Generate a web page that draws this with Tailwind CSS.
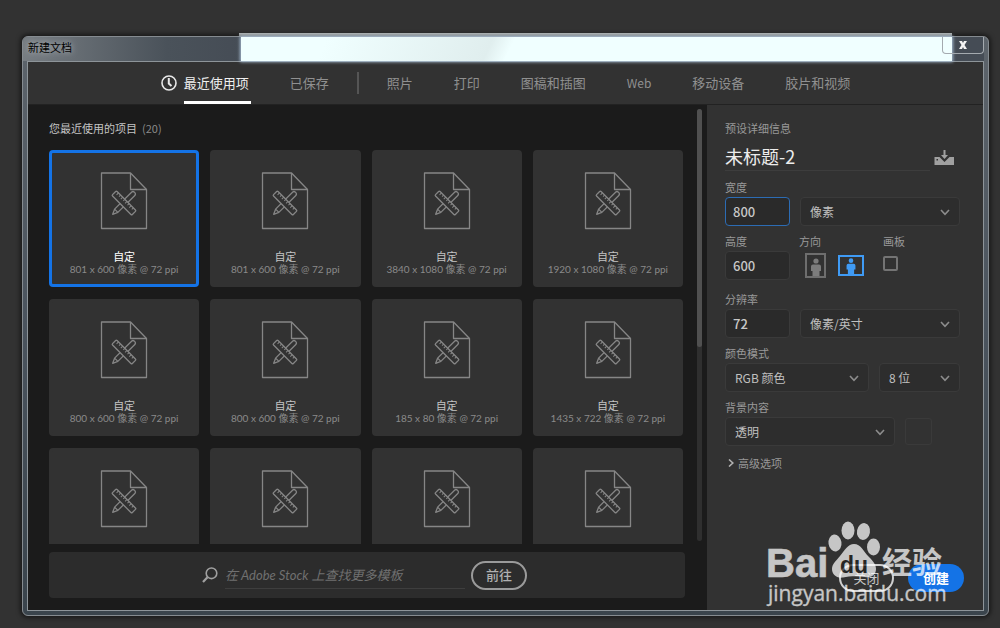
<!DOCTYPE html>
<html lang="zh-CN">
<head>
<meta charset="utf-8">
<title>新建文档</title>
<script src="https://cdn.jsdelivr.net/npm/@tailwindcss/browser@4"></script>
</head>
<body class="bg-[#323232] font-['Noto_Sans_CJK_SC',sans-serif] text-[#b4b4b4]">
<svg class="hidden">
  <symbol id="doc" viewBox="0 0 48 58">
    <g fill="none" stroke="#868686" stroke-width="1.3" stroke-linejoin="round">
      <path d="M1.500 1H30.500L46.500 17.500V56.500H1.500Z"/>
      <path d="M30.500 1V17.500H46.500"/>
      <g transform="translate(24 31) rotate(45)">
        <path d="M-2.300 -13Q-2.300 -15 0 -15Q2.300 -15 2.300 -13V11L0 16L-2.300 11ZM-2.300 11H2.300" fill="#323232"/>
      </g>
      <g transform="translate(24 31) rotate(-45)">
        <rect x="-3.200" y="-14" width="6.400" height="28" rx="1" fill="#323232"/>
        <path d="M3.200 -11H0.500M3.200 -8H1M3.200 -5H0.500M3.200 -2H1M3.200 1H0.500M3.200 4H1M3.200 7H0.500M3.200 10H1" stroke-width="1"/>
      </g>
    </g>
  </symbol>
  <symbol id="chev" viewBox="0 0 10 7"><path d="M1 1L5 5.300L9 1" fill="none" stroke="#8c8c8c" stroke-width="1.600"/></symbol>
  <symbol id="person" viewBox="0 0 14 18"><circle cx="7" cy="3" r="2.600"/><path d="M4 6.500H10Q12 6.500 12 8.500V13H10.500V18H3.500V13H2V8.500Q2 6.500 4 6.500Z"/></symbol>
</svg>

<div class="relative h-screen pl-[22px] pr-[11px] pt-9 pb-3">
  <div class="absolute left-[239px] right-12 top-[33px] h-4 bg-[#d5dbdb]"></div>

  <main class="relative flex h-full flex-col rounded-[6px] border border-[#858b90] bg-linear-to-b from-[#5d646b] via-[#4b545e] to-[#3a444c] px-1 pb-1 shadow-[0_0_4px_2px_rgba(0,0,0,0.5)]">
    <header class="relative flex h-6 shrink-0 items-center pl-px text-[11px] text-black">
      <div class="absolute inset-y-0 -left-1 right-0 bg-linear-to-r from-[#777d82] via-[#4a525a] via-15% to-[#454c55] to-23% rounded-tl-[5px]"></div>
      <div class="absolute inset-y-0 left-[214px] right-[32px] bg-linear-115 from-[#f0ffff] from-12% via-[#e0eeee] via-35% to-[#f0ffff] to-38% shadow-[0_0_3px_1px_#a9bfd6]"></div>
      <h1 class="relative mb-1 text-shadow-[0_0_6px_#c8cccf]">新建文档</h1>
      <button aria-label="关闭窗口" class="absolute right-0 top-0 flex h-[17px] w-[42px] items-center justify-center rounded-b-[4px] border border-t-0 border-[#a4aaaf]">
        <svg class="h-2 w-2.5" viewBox="0 0 10 8"><path d="M1 0H4L5 2L6 0H9L6.500 4L9 8H6L5 6L4 8H1L3.500 4Z" fill="#f4f4f4"/></svg>
      </button>
    </header>

    <div class="flex min-h-0 flex-1 flex-col border border-[#8d9499] bg-[#323232]">
      <nav class="flex h-[42px] shrink-0 items-center justify-center text-[13px] text-[#909090]">
        <svg class="mr-[7px] h-4 w-4" viewBox="0 0 16 16" fill="none" stroke="#e8e8e8"><circle cx="8" cy="8" r="7" stroke-width="1.600"/><path d="M7.800 3V8.500L10.500 11" stroke-width="2"/></svg>
        <a href="#recent" class="mr-[39px] flex h-full w-[67px] items-center border-y-3 border-t-transparent border-b-white whitespace-nowrap text-[#f0f0f0]">最近使用项</a>
        <a href="#saved">已保存</a>
        <span class="ml-7 mr-7 h-[22px] w-0.5 bg-[#555]"></span>
        <div class="flex items-center gap-[41px]">
          <a href="#photo">照片</a><a href="#print">打印</a><a href="#art">图稿和插图</a><a href="#web" class="text-[12px]">Web</a><a href="#mobile">移动设备</a><a href="#film">胶片和视频</a>
        </div>
      </nav>

      <div class="flex min-h-0 flex-1 border-t border-[#222]">
        <section class="flex min-w-0 flex-1 flex-col bg-[#1b1b1b] pb-3 pl-[21px]">
          <div class="flex min-h-0 flex-1">
            <div class="min-w-0 flex-1 overflow-hidden">
              <h2 class="flex h-[45px] items-center gap-[5px] pt-0.5 text-[11px] text-[#c4c4c4]">您最近使用的项目 <span class="text-[#8a8a8a]">(20)</span></h2>
              <div id="cards" class="grid grid-cols-4 gap-x-[11px] gap-y-3"></div>
            </div>
            <div class="mb-[3px] ml-[14px] mr-[5px] mt-1 w-[5px] rounded-full bg-[#2f2f2f]"><div class="h-[55%] rounded-full bg-[#505050]"></div></div>
          </div>
          <form class="mr-[22px] mt-2 flex h-[46px] shrink-0 items-center justify-center rounded-[4px] bg-[#2c2c2c] pr-[5px]">
            <svg class="mr-[7px] h-4 w-4" viewBox="0 0 16 16" fill="none" stroke="#a0a0a0"><circle cx="9.500" cy="6.300" r="5.300" stroke-width="1.600"/><path d="M5.500 10.200L1 15" stroke-width="2.200"/></svg>
            <input aria-label="搜索模板" placeholder="在 Adobe Stock 上查找更多模板" class="h-7 w-60 border-b border-[#3e3e3e] font-[Lato,'Noto_Sans_CJK_SC',sans-serif] text-[13px] italic outline-none placeholder:text-[#707070]">
            <button type="button" class="ml-1.5 h-[29px] w-14 rounded-full border-2 border-[#9a9a9a] text-[13px] font-medium text-[#b0b0b0]">前往</button>
          </form>
        </section>

        <aside class="flex w-[276px] shrink-0 flex-col pb-[18px] pl-[18px] pr-[19px] pt-[15px] text-[11px] text-[#999]">
          <div class="flex flex-1 flex-col pr-1">
            <h2 class="leading-4">预设详细信息</h2>
            <div class="mb-2 mt-2 flex h-[27px] items-center gap-1">
              <input aria-label="名称" value="未标题-2" class="h-[27px] min-w-0 flex-1 border-b border-[#3d3d3d] pb-0.5 text-[18px] text-[#ececec] outline-none">
              <button aria-label="保存预设" class="mr-1.5"><svg class="h-4 w-5" viewBox="0 0 20 16" fill="#a0a0a0"><path d="M9.500 0H11.500V5H14L10.500 9L7 5H9.500Z"/><path d="M0.500 7H5.500L10.500 12L15.500 7H20V15H0.500Z"/><path d="M2.500 9H4V10.500H2.500Z" fill="#323232"/></svg></button>
            </div>

            <label for="w" class="mb-0.5 block h-4 leading-4">宽度</label>
            <div class="flex gap-2.5">
              <input id="w" value="800" class="h-[29px] w-[65px] rounded-[4px] border border-[#2c6cb4] bg-[#2a2a2a] px-[7px] text-[13px] font-medium text-[#c8c8c8] outline-none">
              <div class="relative flex-1"><select aria-label="单位" class="h-[29px] w-full appearance-none rounded-[4px] border border-[#3a3a3a] bg-[#2d2d2d] px-[9px] text-[12px] text-[#c0c0c0]"><option>像素</option></select><svg class="pointer-events-none absolute right-2.5 top-3 h-[7px] w-2.5"><use href="#chev"/></svg></div>
            </div>

            <div class="mt-[7px] flex">
              <div class="w-[74px]"><label for="h" class="mb-0.5 block h-4 leading-4">高度</label><input id="h" value="600" class="h-[29px] w-[65px] rounded-[4px] border border-[#3a3a3a] bg-[#2a2a2a] px-[7px] text-[13px] font-medium text-[#c8c8c8] outline-none"></div>
              <div class="w-[84px]"><div class="mb-0.5 h-4 leading-4">方向</div>
                <div class="flex h-[29px] items-center gap-3 pl-1.5">
                  <button aria-label="纵向" class="flex h-[25px] w-[21px] items-end justify-center border-2 border-[#6e6e6e] fill-[#7c7c7c]"><svg class="h-[18px] w-3.5"><use href="#person"/></svg></button>
                  <button aria-label="横向" class="flex h-[21px] w-[26px] items-end justify-center border-2 border-[#3f9bf5] fill-[#3f9bf5]"><svg class="h-4 w-3.5"><use href="#person"/></svg></button>
                </div></div>
              <div><label for="board" class="mb-0.5 block h-4 leading-4">画板</label><input id="board" type="checkbox" class="mt-[7px] block h-[15px] w-[15px] appearance-none rounded-[2px] border-2 border-[#747474]"></div>
            </div>

            <label for="res" class="mb-0.5 mt-[11px] block h-4 leading-4">分辨率</label>
            <div class="flex gap-2.5">
              <input id="res" value="72" class="h-[29px] w-[65px] rounded-[4px] border border-[#3a3a3a] bg-[#2a2a2a] px-[7px] text-[13px] font-medium text-[#c8c8c8] outline-none">
              <div class="relative flex-1"><select aria-label="分辨率单位" class="h-[29px] w-full appearance-none rounded-[4px] border border-[#3a3a3a] bg-[#2d2d2d] px-[9px] text-[12px] text-[#c0c0c0]"><option>像素/英寸</option></select><svg class="pointer-events-none absolute right-2.5 top-3 h-[7px] w-2.5"><use href="#chev"/></svg></div>
            </div>

            <label for="mode" class="mb-0.5 mt-[7px] block h-4 leading-4">颜色模式</label>
            <div class="flex gap-2.5">
              <div class="relative flex-1"><select id="mode" class="h-[29px] w-full appearance-none rounded-[4px] border border-[#3a3a3a] bg-[#2d2d2d] px-[9px] text-[12px] text-[#c0c0c0]"><option>RGB 颜色</option></select><svg class="pointer-events-none absolute right-2.5 top-3 h-[7px] w-2.5"><use href="#chev"/></svg></div>
              <div class="relative w-[81px]"><select aria-label="位深度" class="h-[29px] w-full appearance-none rounded-[4px] border border-[#3a3a3a] bg-[#2d2d2d] px-[9px] text-[12px] text-[#c0c0c0]"><option>8 位</option></select><svg class="pointer-events-none absolute right-2.5 top-3 h-[7px] w-2.5"><use href="#chev"/></svg></div>
            </div>

            <label for="bg" class="mb-0.5 mt-[7px] block h-4 leading-4">背景内容</label>
            <div class="flex items-center gap-2.5">
              <div class="relative w-[170px]"><select id="bg" class="h-[29px] w-full appearance-none rounded-[4px] border border-[#3a3a3a] bg-[#2d2d2d] px-[9px] text-[12px] text-[#c0c0c0]"><option>透明</option></select><svg class="pointer-events-none absolute right-2.5 top-3 h-[7px] w-2.5"><use href="#chev"/></svg></div>
              <button aria-label="背景颜色" class="h-[27px] w-[27px] rounded-[3px] border border-[#3a3a3a]"></button>
            </div>
            <button class="mt-[9px] flex items-center gap-1 self-start pl-[3px] leading-4"><svg class="h-2 w-1.5" viewBox="0 0 6 8"><path d="M1 0.500L4.800 4L1 7.500" fill="none" stroke="#b0b0b0" stroke-width="1.600"/></svg>高级选项</button>
          </div>
          <div class="flex justify-end gap-3.5 text-[13px]">
            <button class="h-7 w-[55px] rounded-full border-2 border-[#d0d0d0] text-[#c8c8c8]">关闭</button>
            <button class="h-7 w-14 rounded-full bg-[#1473e6] font-bold text-white">创建</button>
          </div>
        </aside>
      </div>
    </div>
  </main>

  <svg class="pointer-events-none absolute bottom-[18px] right-[50px] h-[92px] w-[190px]" viewBox="0 0 190 92" fill="#fff" opacity="0.72" aria-hidden="true">
    <text x="6" y="59" font-family="Liberation Sans, sans-serif" font-weight="700" font-size="40" stroke="#fff" stroke-width="0.600">Bai</text>
    <ellipse cx="75" cy="25" rx="6.500" ry="8.500" transform="rotate(-8 75 25)"/>
    <ellipse cx="88" cy="12.500" rx="6.500" ry="9"/>
    <ellipse cx="103.500" cy="13.500" rx="6.500" ry="8.500" transform="rotate(10 103.500 13.500)"/>
    <ellipse cx="113.500" cy="29" rx="6.500" ry="8.500"/>
    <path d="M94 26C101 26 103 33 109 39C114 44 116 47 116 51C116 57 111 60 105 59C98 58 90 58 83 59.500C76 60.500 72 56 72 51C72 46 76 43 80 38C85 32 88 26 94 26Z"/>
    <text x="80" y="55" font-family="Liberation Sans, sans-serif" font-weight="700" font-size="23" fill="#222">du</text>
    <text x="122" y="55" font-family="Noto Sans CJK SC, sans-serif" font-weight="700" font-size="30">经验</text>
    <text x="8" y="83" font-family="Open Sans, sans-serif" font-size="21" stroke="#fff" stroke-width="0.300">jingyan.baidu.com</text>
  </svg>
</div>

<script>
const sizes = ['801 x 600','801 x 600','3840 x 1080','1920 x 1080','800 x 600','800 x 600','185 x 80','1435 x 722','800 x 600','800 x 600','800 x 600','800 x 600'];
document.getElementById('cards').innerHTML = sizes.map((s, i) => `
  <button class="flex h-[137px] flex-col items-center rounded-[4px] border-3 bg-[#323232] pt-[19px] ${i === 0 ? 'border-[#1473e6]' : 'border-[#323232]'}">
    <svg class="h-[58px] w-12 shrink-0"><use href="#doc"/></svg>
    <span class="mt-[19px] text-[11px] leading-[14px] ${i === 0 ? 'text-white' : 'text-[#c4c4c4]'}">自定</span>
    <span class="font-[Lato,'Noto_Sans_CJK_SC',sans-serif] text-[10px] leading-[13px] whitespace-nowrap text-[#8a8a8a]">${s} 像素 @ 72 ppi</span>
  </button>`).join('');
</script>
</body>
</html>
